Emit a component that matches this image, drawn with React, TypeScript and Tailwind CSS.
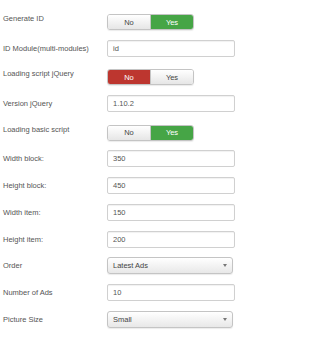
const font = { fontFamily: '"Liberation Sans", Arial, sans-serif' };

type Row =
  | { kind: "toggle"; label: string; value: "yes" | "no" }
  | { kind: "input"; label: string; value: string }
  | { kind: "select"; label: string; value: string };

const rows: Row[] = [
  { kind: "toggle", label: "Generate ID", value: "yes" },
  { kind: "input", label: "ID Module(multi-modules)", value: "id" },
  { kind: "toggle", label: "Loading script jQuery", value: "no" },
  { kind: "input", label: "Version jQuery", value: "1.10.2" },
  { kind: "toggle", label: "Loading basic script", value: "yes" },
  { kind: "input", label: "Width block:", value: "350" },
  { kind: "input", label: "Height block:", value: "450" },
  { kind: "input", label: "Width item:", value: "150" },
  { kind: "input", label: "Height item:", value: "200" },
  { kind: "select", label: "Order", value: "Latest Ads" },
  { kind: "input", label: "Number of Ads", value: "10" },
  { kind: "select", label: "Picture Size", value: "Small" },
];

const Toggle = ({ value }: { value: "yes" | "no" }) => {
  const off = "bg-gradient-to-b from-white to-[#e6e6e6] text-[#444]";
  return (
    <div className="flex h-[16px] w-[87px] overflow-hidden rounded-[3px] border border-[#c4c4c4] shadow-[0_1px_1px_rgba(0,0,0,0.08)]">
      <div
        className={`flex flex-1 items-center justify-center border-r border-[#c4c4c4] ${
          value === "no" ? "bg-[#bd362f] text-white" : off
        }`}
      >
        No
      </div>
      <div
        className={`flex flex-1 items-center justify-center ${
          value === "yes" ? "bg-[#46a546] text-white" : off
        }`}
      >
        Yes
      </div>
    </div>
  );
};

export default function App() {
  return (
    <div className="min-h-[337px] w-[250px] bg-white pt-[11px] text-[7.5px] leading-[9px]" style={font}>
      <div className="flex flex-col gap-[9.7px]">
        {rows.map((row) =>
          row.kind === "toggle" ? (
            <div key={row.label} className="mt-[3px] flex items-start">
              <div className="w-[107px] pl-[3px] text-[#555]">{row.label}</div>
              <Toggle value={row.value} />
            </div>
          ) : row.kind === "input" ? (
            <div key={row.label} className="flex h-[17px] items-center">
              <div className="w-[107px] pl-[3px] text-[#555]">{row.label}</div>
              <div className="flex h-[17px] w-[128px] items-center rounded-[2px] border border-[#d0d0d0] px-[5px] text-[#555] shadow-[inset_0_1px_1px_rgba(0,0,0,0.06)]">
                {row.value}
              </div>
            </div>
          ) : (
            <div key={row.label} className="flex h-[17px] items-center">
              <div className="w-[107px] pl-[3px] text-[#555]">{row.label}</div>
              <div className="flex h-[17px] w-[126px] items-center justify-between rounded-[3px] border border-[#c4c4c4] bg-gradient-to-b from-white to-[#e8e8e8] pl-[5px] pr-[5px] text-[#444] shadow-[0_1px_1px_rgba(0,0,0,0.08)]">
                <span>{row.value}</span>
                <span className="h-0 w-0 border-x-[2.5px] border-t-[3px] border-x-transparent border-t-[#777]" />
              </div>
            </div>
          )
        )}
      </div>
    </div>
  );
}
